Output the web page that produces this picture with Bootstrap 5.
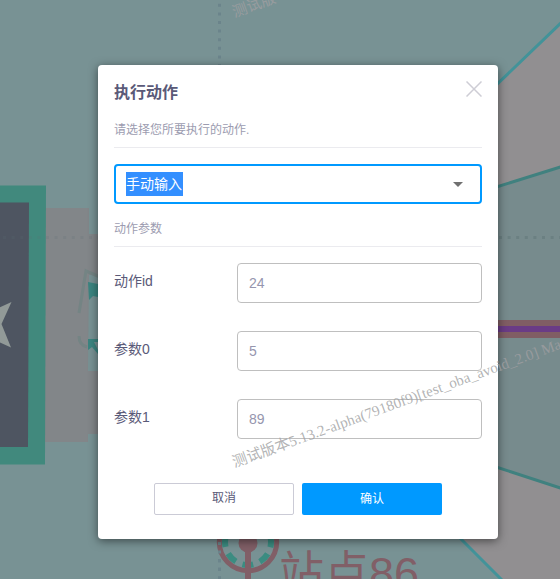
<!DOCTYPE html>
<html lang="zh-CN">
<head>
<meta charset="utf-8">
<meta name="viewport" content="width=device-width, initial-scale=1">
<title>执行动作</title>
<link href="https://cdn.jsdelivr.net/npm/bootstrap@5.3.0/dist/css/bootstrap.min.css" rel="stylesheet">
<style>
body{width:560px;height:579px;background:#789294;font-family:"Liberation Sans","Noto Sans CJK SC",sans-serif;font-size:14px;line-height:20px;color:#5a5a78}
.site-map,.watermark{position:absolute;left:0;top:0;pointer-events:none}
.watermark{z-index:3}
.action-dialog{width:400px;height:474px;margin:65px 0 0 98px;background:#fff;border-radius:4px;padding:16px;z-index:2;box-shadow:0 2px 10px rgba(0,0,0,.5)}
.dialog-title{font-size:16px;line-height:24px;font-weight:700;color:#5a5a78}
.close-btn{width:16px;height:16px}
.hint{font-size:12px;line-height:20px;color:#9c9cb0;border-bottom:1px solid #ebebef}
.hint-top{height:28px;margin-top:15px}
.hint-params{height:28px;margin-top:15px}
.combo{height:40px;margin-top:16px;border:2px solid #09f;border-radius:4px;padding:0 17px 0 10px}
.selected-text{background:#338fff;color:#fff;height:24px;line-height:24px;padding-right:1px}
.caret{width:0;height:0;border:5px solid transparent;border-top-color:#707070;border-bottom:0}
.param-row{height:40px;margin-bottom:28px}
.param-row:first-child{margin-top:16px}
.param-label{width:123px;padding-top:8px}
.param-input{width:245px;height:40px;border:1px solid #bfbfbf;border-radius:4px;padding:0 11px;color:#9696ae;font-size:14px}
.action-btn{width:140px;height:32px;font-size:12px;line-height:18px;border-radius:2px;padding:0}
.btn-cancel{border:1px solid #cbcbd6;color:#5a5a78;background:#fff;padding-bottom:2px}
.btn-ok{background:#09f;color:#fff;border:0}
</style>
<script src="https://cdn.jsdelivr.net/npm/bootstrap@5.3.0/dist/js/bootstrap.bundle.min.js"></script>
</head>
<body class="position-relative overflow-hidden m-0 d-flow-root">
<svg class="site-map" width="560" height="579" viewBox="0 0 560 579">
  <path d="M460 120L560 23V579H501L420 500Z" fill="#918f91"/>
  <path d="M498 186.500L560 167V488L498 467.500L400 430V210Z" fill="#778b8d"/>
  <path d="M490 91L562 22M455 533L502 580" stroke="#429399" stroke-width="3" fill="none"/>
  <path d="M490 189L562 166.500M490 465L562 488.500" stroke="#40817f" stroke-width="3" fill="none"/>
  <path d="M45 208H89V234H110V434H88V442H45Z" fill="#828689"/>
  <path d="M89 275H110V371H88Z" fill="#789294"/>
  <path d="M0 185.500H46L45 464.500H0Z" fill="#41897d"/>
  <path d="M0 202.500H29L28 447H0Z" fill="#4e5561"/>
  <path d="M-8 311L11.500 302L1.500 324L11 347.500L-8 339Z" fill="#929a98"/>
  <path d="M79 313L86 271L100 277M79 336Q79 345 87 347" stroke="#748484" stroke-width="3" fill="none"/>
  <path d="M88 282L98 284V297L93 296L89 300Z" fill="#3b8580"/>
  <path d="M88 339H98V342H94L98 350V354L92 347L88 350Z" fill="#3b8580"/>
  <path d="M219.500 3.800V66M219.500 542V579" stroke="#6b848b" stroke-width="3" stroke-dasharray="3 5.600" fill="none"/>
  <path d="M499 237.500H560" stroke="#6b8082" stroke-width="3" stroke-dasharray="3 5.600" fill="none"/>
  <path d="M3 237.500H98" stroke="#5f6d76" stroke-opacity=".18" stroke-width="3" stroke-dasharray="3 5.600" fill="none"/>
  <path d="M498 320H560V338H498Z" fill="#805d64"/>
  <path d="M498 326H560V332H498Z" fill="#6a3b86"/>
  <g fill="none">
    <circle cx="248" cy="542" r="28.700" stroke="#815f67" stroke-width="5"/>
    <circle cx="248" cy="542" r="23" stroke="#3b8c81" stroke-width="6" stroke-dasharray="11 7.065" stroke-dashoffset="-12.500"/>
    <path d="M248 542V579" stroke="#815f67" stroke-width="6"/>
    <path d="M219.500 542V579" stroke="#6b848b" stroke-width="3" stroke-dasharray="3 5.600"/>
  </g>
  <circle cx="248" cy="543" r="9.500" fill="#815f67"/>
  <text x="279" y="589" font-size="45" fill="#815f67">站点86</text>
</svg>

<main class="action-dialog position-relative">
  <header class="d-flex justify-content-between align-items-start">
    <h1 class="dialog-title m-0">执行动作</h1>
    <button class="close-btn btn p-0 border-0 d-flex" type="button" aria-label="关闭">
      <svg width="16" height="16" viewBox="0 0 16 16"><path d="M.5.5l15 15M15.500.5l-15 15" stroke="#cecdd5" stroke-width="1.500"/></svg>
    </button>
  </header>
  <p class="hint hint-top mb-0">请选择您所要执行的动作.</p>
  <div class="combo d-flex align-items-center justify-content-between">
    <span class="selected-text">手动输入</span><span class="caret"></span>
  </div>
  <p class="hint hint-params mb-0">动作参数</p>
  <form>
    <div class="param-row d-flex"><label class="param-label" for="p-id">动作id</label><input class="param-input" id="p-id" value="24"></div>
    <div class="param-row d-flex"><label class="param-label" for="p-0">参数0</label><input class="param-input" id="p-0" value="5"></div>
    <div class="param-row d-flex"><label class="param-label" for="p-1">参数1</label><input class="param-input" id="p-1" value="89"></div>
    <div class="d-flex justify-content-center gap-2 pt-3">
      <button class="action-btn btn btn-cancel" type="button">取消</button>
      <button class="action-btn btn btn-ok" type="button">确认</button>
    </div>
  </form>
</main>
<svg class="watermark" width="560" height="579" viewBox="0 0 560 579" font-family="'Liberation Serif','Noto Sans CJK SC',serif" font-size="15" letter-spacing=".06" fill="#a09fa2" fill-opacity=".8">
  <text transform="translate(234.500 467.500) rotate(-20)">测试版本5.13.2-alpha(79180f9)[test_oba_avoid_2.0] Mar</text>
  <text transform="translate(234.500 17.500) rotate(-20)">测试版</text>
</svg>
</body>
</html>
